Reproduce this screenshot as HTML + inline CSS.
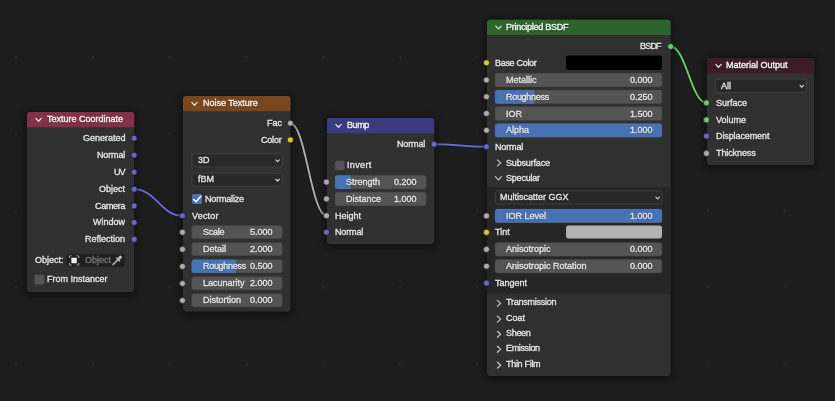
<!DOCTYPE html>
<html><head><meta charset="utf-8"><title>Shader Nodes</title>
<style>
html,body{margin:0;padding:0}
body{width:835px;height:401px;overflow:hidden;background:#1d1d1d;position:relative;font-family:"Liberation Sans","DejaVu Sans",sans-serif;font-size:9.0px;color:#e4e4e4}
svg{position:absolute;left:0;top:0}
.t{position:absolute;will-change:transform;white-space:nowrap;line-height:14px;margin-top:-7px;text-shadow:0 1px 1px rgba(0,0,0,.55);-webkit-text-stroke:.35px currentColor}
.t.r{text-align:right}
.t.hd{color:#f4f4f4}
.t.dim{color:#727272;text-shadow:none}
</style></head>
<body>
<svg width="835" height="401" viewBox="0 0 835 401"><defs><filter id="sh" x="-20%" y="-20%" width="140%" height="140%"><feGaussianBlur stdDeviation="3"/></filter></defs>
<circle cx="16.0" cy="57.0" r="1.2" fill="#292929"/>
<circle cx="16.0" cy="133.8" r="1.2" fill="#292929"/>
<circle cx="16.0" cy="210.7" r="1.2" fill="#292929"/>
<circle cx="16.0" cy="287.5" r="1.2" fill="#292929"/>
<circle cx="16.0" cy="364.4" r="1.2" fill="#292929"/>
<circle cx="92.8" cy="57.0" r="1.2" fill="#292929"/>
<circle cx="92.8" cy="133.8" r="1.2" fill="#292929"/>
<circle cx="92.8" cy="210.7" r="1.2" fill="#292929"/>
<circle cx="92.8" cy="287.5" r="1.2" fill="#292929"/>
<circle cx="92.8" cy="364.4" r="1.2" fill="#292929"/>
<circle cx="169.7" cy="57.0" r="1.2" fill="#292929"/>
<circle cx="169.7" cy="133.8" r="1.2" fill="#292929"/>
<circle cx="169.7" cy="210.7" r="1.2" fill="#292929"/>
<circle cx="169.7" cy="287.5" r="1.2" fill="#292929"/>
<circle cx="169.7" cy="364.4" r="1.2" fill="#292929"/>
<circle cx="246.5" cy="57.0" r="1.2" fill="#292929"/>
<circle cx="246.5" cy="133.8" r="1.2" fill="#292929"/>
<circle cx="246.5" cy="210.7" r="1.2" fill="#292929"/>
<circle cx="246.5" cy="287.5" r="1.2" fill="#292929"/>
<circle cx="246.5" cy="364.4" r="1.2" fill="#292929"/>
<circle cx="323.4" cy="57.0" r="1.2" fill="#292929"/>
<circle cx="323.4" cy="133.8" r="1.2" fill="#292929"/>
<circle cx="323.4" cy="210.7" r="1.2" fill="#292929"/>
<circle cx="323.4" cy="287.5" r="1.2" fill="#292929"/>
<circle cx="323.4" cy="364.4" r="1.2" fill="#292929"/>
<circle cx="400.2" cy="57.0" r="1.2" fill="#292929"/>
<circle cx="400.2" cy="133.8" r="1.2" fill="#292929"/>
<circle cx="400.2" cy="210.7" r="1.2" fill="#292929"/>
<circle cx="400.2" cy="287.5" r="1.2" fill="#292929"/>
<circle cx="400.2" cy="364.4" r="1.2" fill="#292929"/>
<circle cx="477.1" cy="57.0" r="1.2" fill="#292929"/>
<circle cx="477.1" cy="133.8" r="1.2" fill="#292929"/>
<circle cx="477.1" cy="210.7" r="1.2" fill="#292929"/>
<circle cx="477.1" cy="287.5" r="1.2" fill="#292929"/>
<circle cx="477.1" cy="364.4" r="1.2" fill="#292929"/>
<circle cx="554.0" cy="57.0" r="1.2" fill="#292929"/>
<circle cx="554.0" cy="133.8" r="1.2" fill="#292929"/>
<circle cx="554.0" cy="210.7" r="1.2" fill="#292929"/>
<circle cx="554.0" cy="287.5" r="1.2" fill="#292929"/>
<circle cx="554.0" cy="364.4" r="1.2" fill="#292929"/>
<circle cx="630.8" cy="57.0" r="1.2" fill="#292929"/>
<circle cx="630.8" cy="133.8" r="1.2" fill="#292929"/>
<circle cx="630.8" cy="210.7" r="1.2" fill="#292929"/>
<circle cx="630.8" cy="287.5" r="1.2" fill="#292929"/>
<circle cx="630.8" cy="364.4" r="1.2" fill="#292929"/>
<circle cx="707.7" cy="57.0" r="1.2" fill="#292929"/>
<circle cx="707.7" cy="133.8" r="1.2" fill="#292929"/>
<circle cx="707.7" cy="210.7" r="1.2" fill="#292929"/>
<circle cx="707.7" cy="287.5" r="1.2" fill="#292929"/>
<circle cx="707.7" cy="364.4" r="1.2" fill="#292929"/>
<circle cx="784.5" cy="57.0" r="1.2" fill="#292929"/>
<circle cx="784.5" cy="133.8" r="1.2" fill="#292929"/>
<circle cx="784.5" cy="210.7" r="1.2" fill="#292929"/>
<circle cx="784.5" cy="287.5" r="1.2" fill="#292929"/>
<circle cx="784.5" cy="364.4" r="1.2" fill="#292929"/>
<path d="M134.1 189.2 C155.88 189.2 160.72 215.8 182.5 215.8" fill="none" stroke="#131313" stroke-width="3.3" stroke-linecap="round"/><path d="M134.1 189.2 C155.88 189.2 160.72 215.8 182.5 215.8" fill="none" stroke="#6666cf" stroke-width="1.9" stroke-linecap="round"/>
<path d="M290.3 123.2 C305.5 123.2 311.3 215.7 326.5 215.7" fill="none" stroke="#131313" stroke-width="3.3" stroke-linecap="round"/><path d="M290.3 123.2 C305.5 123.2 311.3 215.7 326.5 215.7" fill="none" stroke="#acacac" stroke-width="1.9" stroke-linecap="round"/>
<path d="M434.1 144.3 C457.68 144.3 462.92 146.7 486.5 146.7" fill="none" stroke="#131313" stroke-width="3.3" stroke-linecap="round"/><path d="M434.1 144.3 C457.68 144.3 462.92 146.7 486.5 146.7" fill="none" stroke="#6666cf" stroke-width="1.9" stroke-linecap="round"/>
<path d="M670.6 46.5 C685.68 46.5 691.42 102.9 706.5 102.9" fill="none" stroke="#131313" stroke-width="3.3" stroke-linecap="round"/><path d="M670.6 46.5 C685.68 46.5 691.42 102.9 706.5 102.9" fill="none" stroke="#66cc66" stroke-width="1.9" stroke-linecap="round"/>
<rect x="24.5" y="110.5" width="112.2" height="185.5" rx="5" fill="#000" opacity=".42" filter="url(#sh)"/>
<rect x="26.4" y="111.4" width="108.4" height="181.2" rx="3.6" fill="#151515"/>
<rect x="27" y="112" width="107.2" height="180" rx="3" fill="#303030"/>
<path d="M27 127.3 V115 Q27 112 30 112 H131.2 Q134.2 112 134.2 115 V127.3 Z" fill="#83314a"/>
<path d="M35.8 118.35 L38.5 121.25 L41.2 118.35" fill="none" stroke="#e6e6e6" stroke-width="1.2" stroke-linecap="round" stroke-linejoin="round"/>
<circle cx="134.1" cy="138.2" r="3.05" fill="#6666cf" stroke="#161616" stroke-width=".7"/>
<circle cx="134.1" cy="155.2" r="3.05" fill="#6666cf" stroke="#161616" stroke-width=".7"/>
<circle cx="134.1" cy="172.2" r="3.05" fill="#6666cf" stroke="#161616" stroke-width=".7"/>
<circle cx="134.1" cy="189.2" r="3.05" fill="#6666cf" stroke="#161616" stroke-width=".7"/>
<circle cx="134.1" cy="205.9" r="3.05" fill="#6666cf" stroke="#161616" stroke-width=".7"/>
<circle cx="134.1" cy="222.5" r="3.05" fill="#6666cf" stroke="#161616" stroke-width=".7"/>
<circle cx="134.1" cy="239.4" r="3.05" fill="#6666cf" stroke="#161616" stroke-width=".7"/>
<rect x="66.2" y="254" width="58.5" height="13" rx="2.5" fill="#1f1f1f" stroke="#2b2b2b" stroke-width="0.6"/>
<g transform="translate(68.8 255.2) scale(.8833)"><rect x="2.900" y="2.900" width="6.2" height="6.2" rx=".6" fill="#ececec"/><path d="M.7 3.200V1.700Q.7 .7 1.700 .7H3.200M8.800 .7h1.500Q11.300 .7 11.300 1.700V3.200M11.300 8.800v1.500Q11.300 11.300 10.300 11.300H8.800M3.200 11.300H1.700Q.7 11.300 .7 10.300V8.800" fill="none" stroke="#d8d8d8" stroke-width=".9"/></g>
<g transform="translate(111.3 254.800) scale(.9583)"><path d="M.8 11.200 L1.300 9.300 L6.300 4.300 L7.700 5.700 L2.700 10.700 Z" fill="#a8a8a8"/><path d="M5.600 3.300 L8.700 6.400" stroke="#b4b4b4" stroke-width="1.500" stroke-linecap="round"/><path d="M7.600 4.400 L9.600 2.400" stroke="#b4b4b4" stroke-width="3.200" stroke-linecap="round"/></g>
<rect x="34.5" y="274.7" width="9.9" height="9.9" rx="1.5" fill="#545454" stroke="#3f3f3f" stroke-width="0.5"/>
<rect x="180.5" y="94.5" width="112.4" height="220.9" rx="5" fill="#000" opacity=".42" filter="url(#sh)"/>
<rect x="182.4" y="95.4" width="108.6" height="216.6" rx="3.6" fill="#151515"/>
<rect x="183" y="96" width="107.4" height="215.4" rx="3" fill="#303030"/>
<path d="M183 111.3 V99 Q183 96 186 96 H287.4 Q290.4 96 290.4 99 V111.3 Z" fill="#79461d"/>
<path d="M191.8 102.35 L194.5 105.25 L197.2 102.35" fill="none" stroke="#e6e6e6" stroke-width="1.2" stroke-linecap="round" stroke-linejoin="round"/>
<circle cx="290.3" cy="123.2" r="3.05" fill="#acacac" stroke="#161616" stroke-width=".7"/>
<circle cx="290.3" cy="139.9" r="3.05" fill="#cfcf2b" stroke="#161616" stroke-width=".7"/>
<rect x="191.9" y="153.7" width="90.3" height="13.2" rx="2.5" fill="#282828" stroke="#414141" stroke-width="1"/>
<path d="M275.85 159.9 L277.6 161.7 L279.35 159.9" fill="none" stroke="#dedede" stroke-width="1.1" stroke-linecap="round" stroke-linejoin="round"/>
<rect x="191.9" y="173.1" width="90.3" height="13.1" rx="2.5" fill="#282828" stroke="#414141" stroke-width="1"/>
<path d="M275.85 179.25 L277.6 181.05 L279.35 179.25" fill="none" stroke="#dedede" stroke-width="1.1" stroke-linecap="round" stroke-linejoin="round"/>
<rect x="192" y="194" width="10" height="10" rx="1.5" fill="#4772b3"/>
<path d="M193.7 199.6 L196.2 201.8 L200.7 196.2" fill="none" stroke="#fff" stroke-width="1.5" stroke-linecap="round" stroke-linejoin="round"/>
<circle cx="182.5" cy="215.8" r="3.05" fill="#6666cf" stroke="#161616" stroke-width=".7"/>
<rect x="191.6" y="225.5" width="90.6" height="13.3" rx="2.5" fill="#545454" stroke="#3f3f3f" stroke-width="0.5"/>
<circle cx="182.5" cy="232.35" r="3.05" fill="#acacac" stroke="#161616" stroke-width=".7"/>
<rect x="191.6" y="242.5" width="90.6" height="13.3" rx="2.5" fill="#545454" stroke="#3f3f3f" stroke-width="0.5"/>
<circle cx="182.5" cy="249.35" r="3.05" fill="#acacac" stroke="#161616" stroke-width=".7"/>
<rect x="191.6" y="259.6" width="90.6" height="13.3" rx="2.5" fill="#545454" stroke="#3f3f3f" stroke-width="0.5"/>
<path d="M235.99 259.6 H194.1 Q191.6 259.6 191.6 262.1 V270.4 Q191.6 272.9 194.1 272.9 H235.99 Z" fill="#4772b3"/>
<circle cx="182.5" cy="266.45" r="3.05" fill="#acacac" stroke="#161616" stroke-width=".7"/>
<rect x="191.6" y="276.6" width="90.6" height="13.3" rx="2.5" fill="#545454" stroke="#3f3f3f" stroke-width="0.5"/>
<circle cx="182.5" cy="283.45" r="3.05" fill="#acacac" stroke="#161616" stroke-width=".7"/>
<rect x="191.6" y="293.7" width="90.6" height="13.3" rx="2.5" fill="#545454" stroke="#3f3f3f" stroke-width="0.5"/>
<circle cx="182.5" cy="300.55" r="3.05" fill="#acacac" stroke="#161616" stroke-width=".7"/>
<rect x="324.5" y="116.5" width="112.2" height="131.5" rx="5" fill="#000" opacity=".42" filter="url(#sh)"/>
<rect x="326.4" y="117.4" width="108.4" height="127.2" rx="3.6" fill="#151515"/>
<rect x="327" y="118" width="107.2" height="126" rx="3" fill="#303030"/>
<path d="M327 133.3 V121 Q327 118 330 118 H431.2 Q434.2 118 434.2 121 V133.3 Z" fill="#3b3b83"/>
<path d="M335.8 124.35 L338.5 127.25 L341.2 124.35" fill="none" stroke="#e6e6e6" stroke-width="1.2" stroke-linecap="round" stroke-linejoin="round"/>
<circle cx="434.1" cy="144.3" r="3.05" fill="#6666cf" stroke="#161616" stroke-width=".7"/>
<rect x="335" y="160.7" width="9.5" height="9.5" rx="1.5" fill="#545454" stroke="#3f3f3f" stroke-width="0.5"/>
<rect x="335" y="175.2" width="91.2" height="13.8" rx="2.5" fill="#545454" stroke="#3f3f3f" stroke-width="0.5"/>
<path d="M350.96 175.2 H337.5 Q335 175.2 335 177.7 V186.5 Q335 189 337.5 189 H350.96 Z" fill="#4772b3"/>
<circle cx="326.5" cy="182.1" r="3.05" fill="#acacac" stroke="#161616" stroke-width=".7"/>
<rect x="335" y="192.1" width="91.2" height="13.8" rx="2.5" fill="#545454" stroke="#3f3f3f" stroke-width="0.5"/>
<circle cx="326.5" cy="198.9" r="3.05" fill="#acacac" stroke="#161616" stroke-width=".7"/>
<circle cx="326.5" cy="215.7" r="3.05" fill="#acacac" stroke="#161616" stroke-width=".7"/>
<circle cx="326.5" cy="232.2" r="3.05" fill="#6666cf" stroke="#161616" stroke-width=".7"/>
<rect x="484.5" y="18.2" width="188.7" height="361.7" rx="5" fill="#000" opacity=".42" filter="url(#sh)"/>
<rect x="486.4" y="19.1" width="184.9" height="357.4" rx="3.6" fill="#151515"/>
<rect x="487" y="19.7" width="183.7" height="356.2" rx="3" fill="#303030"/>
<path d="M487 35 V22.7 Q487 19.7 490 19.7 H667.7 Q670.7 19.7 670.7 22.7 V35 Z" fill="#2b652b"/>
<path d="M495.8 26.05 L498.5 28.95 L501.2 26.05" fill="none" stroke="#e6e6e6" stroke-width="1.2" stroke-linecap="round" stroke-linejoin="round"/>
<rect x="487" y="187" width="183.7" height="106.7" fill="#262626"/>
<circle cx="670.6" cy="46.5" r="3.05" fill="#66cc66" stroke="#161616" stroke-width=".7"/>
<circle cx="486.5" cy="62.8" r="3.05" fill="#cfcf2b" stroke="#161616" stroke-width=".7"/>
<rect x="566" y="55.5" width="96" height="14.5" rx="2.5" fill="#000"/>
<rect x="495" y="73.1" width="167" height="13.8" rx="2.5" fill="#545454" stroke="#3f3f3f" stroke-width="0.5"/>
<circle cx="486.5" cy="80" r="3.05" fill="#acacac" stroke="#161616" stroke-width=".7"/>
<rect x="495" y="89.9" width="167" height="13.8" rx="2.5" fill="#545454" stroke="#3f3f3f" stroke-width="0.5"/>
<path d="M534.58 89.9 H497.5 Q495 89.9 495 92.4 V101.2 Q495 103.7 497.5 103.7 H534.58 Z" fill="#4772b3"/>
<circle cx="486.5" cy="96.8" r="3.05" fill="#acacac" stroke="#161616" stroke-width=".7"/>
<rect x="495" y="106.6" width="167" height="13.8" rx="2.5" fill="#545454" stroke="#3f3f3f" stroke-width="0.5"/>
<circle cx="486.5" cy="113.5" r="3.05" fill="#acacac" stroke="#161616" stroke-width=".7"/>
<rect x="495" y="123.4" width="167" height="13.8" rx="2.5" fill="#545454" stroke="#3f3f3f" stroke-width="0.5"/>
<rect x="495" y="123.4" width="167" height="13.8" rx="2.5" fill="#4772b3"/>
<circle cx="486.5" cy="130.3" r="3.05" fill="#acacac" stroke="#161616" stroke-width=".7"/>
<circle cx="486.5" cy="146.7" r="3.05" fill="#6666cf" stroke="#161616" stroke-width=".7"/>
<path d="M497.4 159.9 L500.6 162.9 L497.4 165.9" fill="none" stroke="#c8c8c8" stroke-width="1.2" stroke-linecap="round" stroke-linejoin="round"/>
<path d="M495.4 176.7 L498.4 179.9 L501.4 176.7" fill="none" stroke="#c8c8c8" stroke-width="1.2" stroke-linecap="round" stroke-linejoin="round"/>
<rect x="495.4" y="190.9" width="166.8" height="13.2" rx="2.5" fill="#282828" stroke="#414141" stroke-width="1"/>
<path d="M655.85 197.1 L657.6 198.9 L659.35 197.1" fill="none" stroke="#dedede" stroke-width="1.1" stroke-linecap="round" stroke-linejoin="round"/>
<rect x="495" y="208.9" width="167" height="13.8" rx="2.5" fill="#545454" stroke="#3f3f3f" stroke-width="0.5"/>
<rect x="495" y="208.9" width="167" height="13.8" rx="2.5" fill="#4772b3"/>
<circle cx="486.5" cy="215.9" r="3.05" fill="#acacac" stroke="#161616" stroke-width=".7"/>
<circle cx="486.5" cy="232.4" r="3.05" fill="#cfcf2b" stroke="#161616" stroke-width=".7"/>
<rect x="566" y="225.5" width="96" height="13" rx="2.5" fill="#b3b3b3"/>
<rect x="495" y="242.4" width="167" height="13.8" rx="2.5" fill="#545454" stroke="#3f3f3f" stroke-width="0.5"/>
<circle cx="486.5" cy="249.4" r="3.05" fill="#acacac" stroke="#161616" stroke-width=".7"/>
<rect x="495" y="259.2" width="167" height="13.8" rx="2.5" fill="#545454" stroke="#3f3f3f" stroke-width="0.5"/>
<circle cx="486.5" cy="266.2" r="3.05" fill="#acacac" stroke="#161616" stroke-width=".7"/>
<circle cx="486.5" cy="283.1" r="3.05" fill="#6666cf" stroke="#161616" stroke-width=".7"/>
<path d="M497.4 300.4 L500.6 303.4 L497.4 306.4" fill="none" stroke="#c8c8c8" stroke-width="1.2" stroke-linecap="round" stroke-linejoin="round"/>
<path d="M497.4 316.1 L500.6 319.1 L497.4 322.1" fill="none" stroke="#c8c8c8" stroke-width="1.2" stroke-linecap="round" stroke-linejoin="round"/>
<path d="M497.4 331.3 L500.6 334.3 L497.4 337.3" fill="none" stroke="#c8c8c8" stroke-width="1.2" stroke-linecap="round" stroke-linejoin="round"/>
<path d="M497.4 346.3 L500.6 349.3 L497.4 352.3" fill="none" stroke="#c8c8c8" stroke-width="1.2" stroke-linecap="round" stroke-linejoin="round"/>
<path d="M497.4 362.2 L500.6 365.2 L497.4 368.2" fill="none" stroke="#c8c8c8" stroke-width="1.2" stroke-linecap="round" stroke-linejoin="round"/>
<rect x="704.5" y="56.5" width="112.2" height="112.5" rx="5" fill="#000" opacity=".42" filter="url(#sh)"/>
<rect x="706.4" y="57.4" width="108.4" height="108.2" rx="3.6" fill="#151515"/>
<rect x="707" y="58" width="107.2" height="107" rx="3" fill="#303030"/>
<path d="M707 73.3 V61 Q707 58 710 58 H811.2 Q814.2 58 814.2 61 V73.3 Z" fill="#3c1d26"/>
<path d="M715.8 64.35 L718.5 67.25 L721.2 64.35" fill="none" stroke="#e6e6e6" stroke-width="1.2" stroke-linecap="round" stroke-linejoin="round"/>
<rect x="715.4" y="79" width="91" height="13.6" rx="2.5" fill="#282828" stroke="#414141" stroke-width="1"/>
<path d="M800.05 85.4 L801.8 87.2 L803.55 85.4" fill="none" stroke="#dedede" stroke-width="1.1" stroke-linecap="round" stroke-linejoin="round"/>
<circle cx="706.5" cy="102.9" r="3.05" fill="#66cc66" stroke="#161616" stroke-width=".7"/>
<circle cx="706.5" cy="119.9" r="3.05" fill="#66cc66" stroke="#161616" stroke-width=".7"/>
<circle cx="706.5" cy="136.1" r="3.05" fill="#6666cf" stroke="#161616" stroke-width=".7"/>
<circle cx="706.5" cy="153.4" r="3.05" fill="#acacac" stroke="#161616" stroke-width=".7"/>
</svg>
<div class="t hd" style="left:47.3px;top:118.65px">Texture Coordinate</div>
<div class="t r " style="right:709.5px;top:138px">Generated</div>
<div class="t r " style="right:709.65px;top:155px;letter-spacing:-0.15px">Normal</div>
<div class="t r " style="right:710.5px;top:172px;letter-spacing:-1.0px">UV</div>
<div class="t r " style="right:709.5px;top:189px">Object</div>
<div class="t r " style="right:709.8px;top:205.7px;letter-spacing:-0.3px">Camera</div>
<div class="t r " style="right:709.5px;top:222.3px">Window</div>
<div class="t r " style="right:709.5px;top:239.2px">Reflection</div>
<div class="t " style="left:35px;top:260.3px">Object:</div>
<div class="t dim" style="left:85px;top:260.3px">Object</div>
<div class="t " style="left:46.6px;top:278.8px">From Instancer</div>
<div class="t hd" style="left:203.3px;top:102.65px">Noise Texture</div>
<div class="t r " style="right:553px;top:123px">Fac</div>
<div class="t r " style="right:553.2px;top:139.7px;letter-spacing:-0.2px">Color</div>
<div class="t " style="left:197.5px;top:160.3px">3D</div>
<div class="t " style="left:197.5px;top:178.85px">fBM</div>
<div class="t " style="left:205px;top:198.7px;letter-spacing:-0.18px">Normalize</div>
<div class="t " style="left:192px;top:215.6px;letter-spacing:0.2px">Vector</div>
<div class="t " style="left:202.6px;top:232.15px;letter-spacing:-0.25px">Scale</div>
<div class="t r " style="right:562.3px;top:232.15px">5.000</div>
<div class="t " style="left:202.6px;top:249.15px">Detail</div>
<div class="t r " style="right:562.3px;top:249.15px">2.000</div>
<div class="t " style="left:202.6px;top:266.25px;letter-spacing:-0.3px">Roughness</div>
<div class="t r " style="right:562.3px;top:266.25px">0.500</div>
<div class="t " style="left:202.6px;top:283.25px">Lacunarity</div>
<div class="t r " style="right:562.3px;top:283.25px">2.000</div>
<div class="t " style="left:202.6px;top:300.35px">Distortion</div>
<div class="t r " style="right:562.3px;top:300.35px">0.000</div>
<div class="t hd" style="left:347.3px;top:124.65px;letter-spacing:-0.4px">Bump</div>
<div class="t r " style="right:409.65px;top:144.1px;letter-spacing:-0.15px">Normal</div>
<div class="t " style="left:347px;top:164.7px;letter-spacing:0.35px">Invert</div>
<div class="t " style="left:346px;top:181.8px">Strength</div>
<div class="t r " style="right:418.8px;top:181.8px">0.200</div>
<div class="t " style="left:346px;top:198.7px">Distance</div>
<div class="t r " style="right:418.8px;top:198.7px">1.000</div>
<div class="t " style="left:335px;top:215.5px">Height</div>
<div class="t " style="left:335px;top:232px;letter-spacing:-0.15px">Normal</div>
<div class="t hd" style="left:506.1px;top:27.15px;letter-spacing:-0.25px">Principled BSDF</div>
<div class="t r " style="right:173.8px;top:46.3px;letter-spacing:-0.8px">BSDF</div>
<div class="t " style="left:495px;top:62.6px;letter-spacing:-0.3px">Base Color</div>
<div class="t " style="left:506px;top:80px">Metallic</div>
<div class="t r " style="right:182.5px;top:80px">0.000</div>
<div class="t " style="left:506px;top:96.8px;letter-spacing:-0.3px">Roughness</div>
<div class="t r " style="right:182.5px;top:96.8px">0.250</div>
<div class="t " style="left:506px;top:113.5px">IOR</div>
<div class="t r " style="right:182.5px;top:113.5px">1.500</div>
<div class="t " style="left:506px;top:130.3px">Alpha</div>
<div class="t r " style="right:182.5px;top:130.3px">1.000</div>
<div class="t " style="left:495px;top:146.5px;letter-spacing:-0.15px">Normal</div>
<div class="t " style="left:506px;top:162.7px;letter-spacing:-0.17px">Subsurface</div>
<div class="t " style="left:506px;top:178px;letter-spacing:-0.2px">Specular</div>
<div class="t " style="left:500px;top:196.6px">Multiscatter GGX</div>
<div class="t " style="left:506px;top:215.8px">IOR Level</div>
<div class="t r " style="right:182.5px;top:215.8px">1.000</div>
<div class="t " style="left:495px;top:232px">Tint</div>
<div class="t " style="left:506px;top:249.3px">Anisotropic</div>
<div class="t r " style="right:182.5px;top:249.3px">0.000</div>
<div class="t " style="left:506px;top:266.1px">Anisotropic Rotation</div>
<div class="t r " style="right:182.5px;top:266.1px">0.000</div>
<div class="t " style="left:495px;top:282.9px">Tangent</div>
<div class="t " style="left:506px;top:302px;letter-spacing:-0.25px">Transmission</div>
<div class="t " style="left:506px;top:317.7px">Coat</div>
<div class="t " style="left:506px;top:332.9px;letter-spacing:-0.3px">Sheen</div>
<div class="t " style="left:506px;top:347.9px;letter-spacing:-0.35px">Emission</div>
<div class="t " style="left:506px;top:363.8px;letter-spacing:-0.3px">Thin Film</div>
<div class="t hd" style="left:726.2px;top:64.65px">Material Output</div>
<div class="t " style="left:721.4px;top:85.8px">All</div>
<div class="t " style="left:716px;top:102.7px">Surface</div>
<div class="t " style="left:716px;top:119.7px">Volume</div>
<div class="t " style="left:716px;top:135.9px;letter-spacing:-0.1px">Displacement</div>
<div class="t " style="left:716px;top:153.2px;letter-spacing:-0.1px">Thickness</div>
</body></html>
